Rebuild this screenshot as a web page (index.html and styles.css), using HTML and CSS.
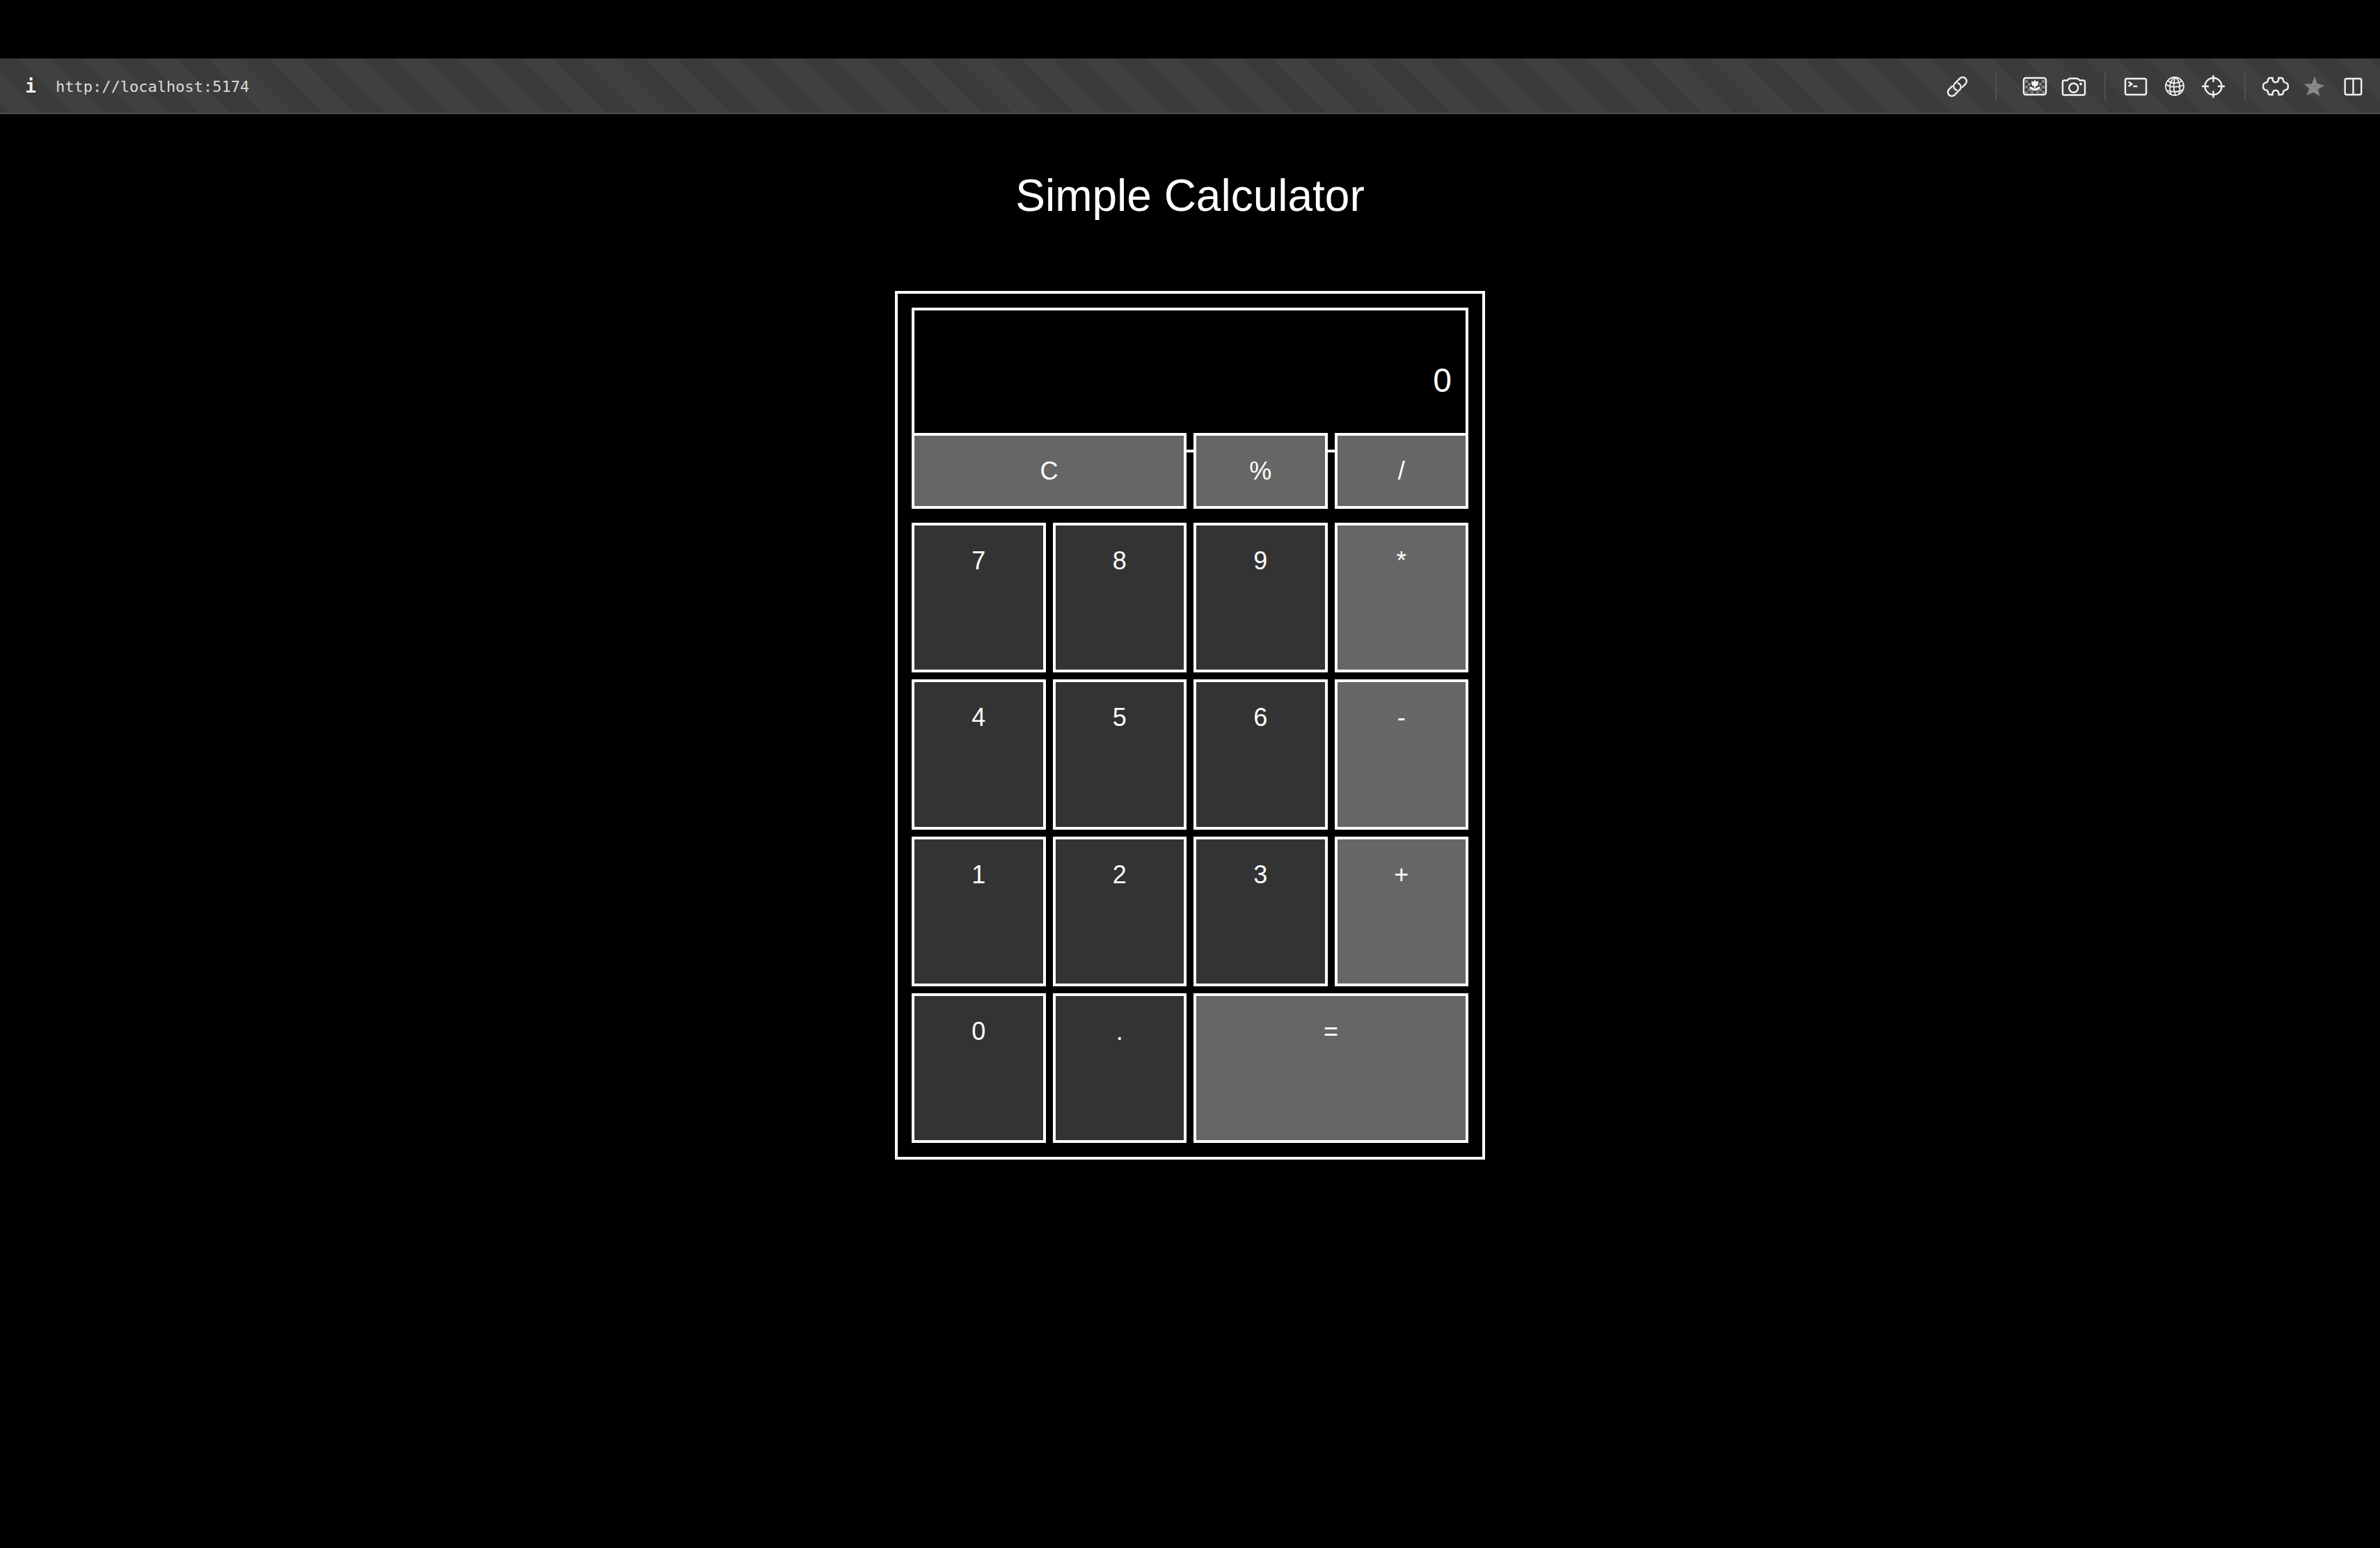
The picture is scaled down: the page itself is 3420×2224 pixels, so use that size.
FILE: index.html
```
<!DOCTYPE html>
<html lang="en">
<head>
  <meta charset="utf-8">
  <title>Simple Calculator</title>
  <link rel="stylesheet" href="styles.css">
</head>
<body>
  <header class="toolbar">
    <button class="site-info" type="button" aria-label="Site information">i</button>
    <input class="address" type="text" value="http://localhost:5174" aria-label="Address" spellcheck="false">
    <button class="tool" type="button" aria-label="Copy link">
      <svg class="icon" viewBox="0 0 40 40">
        <path d="M14 19 L8.700 24.300 A5.650 5.650 0 0 0 16.700 32.300 L24 25 A5.800 5.800 0 0 0 24 17 Q22.500 15.500 20.500 15.500"/>
        <path d="M27 22 L32.300 16.700 A5.650 5.650 0 0 0 24.300 8.700 L17 16 A5.800 5.800 0 0 0 17 24 Q18.500 25.500 20.500 25.500"/>
      </svg>
    </button>
    <span class="divider divider-wide"></span>
    <div class="tool-group">
      <button class="tool" type="button" aria-label="Picture">
        <svg class="icon" viewBox="0 0 40 40">
          <path class="checks" d="M6 11h4v4H6zM6 19h4v4H6zM6 27h4v3H6zM10 15h4v4h-4zM10 23h4v4h-4zM14 27h4v3h-4zM22 27h4v3h-4zM26 15h4v4h-4zM26 23h4v4h-4zM30 11h4v4h-4zM30 19h4v4h-4zM30 27h4v3h-4z"/>
          <rect x="4" y="8" width="32" height="24" rx="3"/>
          <path class="solid" d="M15.300 12 L17.700 13.600 L20 11 L22.500 13.600 L25 12 V16 Q25 19.500 21 20.200 V24 Q23 20.500 28 20.500 Q27 26.300 20.200 26.300 Q13 26.300 12 20.500 Q17.500 20.500 19.200 24 V20.200 Q15.300 19.500 15.300 16 Z"/>
        </svg>
      </button>
      <button class="tool" type="button" aria-label="Capture">
        <svg class="icon" viewBox="0 0 40 40">
          <path d="M6.500 11.500 H10.500 L13.500 9 Q14 8.700 14.700 8.700 H24.500 Q25.200 8.700 25.700 9 L28.700 11.500 H33.500 Q36 11.500 36 14 V30 Q36 32.500 33.500 32.500 H6.500 Q4 32.500 4 30 V14 Q4 11.500 6.500 11.500 Z"/>
          <circle cx="19.700" cy="22.300" r="6.500"/>
          <circle class="solid" cx="30" cy="16.700" r="1.900"/>
        </svg>
      </button>
    </div>
    <span class="divider"></span>
    <div class="tool-group">
      <button class="tool" type="button" aria-label="Console">
        <svg class="icon" viewBox="0 0 40 40">
          <rect x="5" y="9" width="30" height="23" rx="2.500"/>
          <path d="M9.700 13.500 L14.300 16.700 L9.700 20 M16.300 20 H22.300"/>
        </svg>
      </button>
      <button class="tool" type="button" aria-label="Network">
        <svg class="icon icon-fine" viewBox="0 0 40 40">
          <circle cx="20" cy="20" r="13"/>
          <path d="M21 7 C13 11 11 21 15 32 M21 7 C18 14 18 24 21 33 M21 7 C27 12 29 21 26 31 M10 12 C16 16.500 24 16 31 12 M7 17 C14 22 25 22 33 18 M9 26 C15 28 25 29 32 25"/>
        </svg>
      </button>
      <button class="tool" type="button" aria-label="Inspect">
        <svg class="icon" viewBox="0 0 40 40">
          <circle cx="19.500" cy="20" r="12"/>
          <path d="M19.500 4 V14 M19.500 26.500 V36.500 M3 20 H13 M26 20 H36"/>
        </svg>
      </button>
    </div>
    <span class="divider"></span>
    <div class="tool-group">
      <button class="tool" type="button" aria-label="Extensions">
        <svg class="icon" viewBox="0 0 40 40">
          <path d="M15.500 8 C15.500 12.500 17 14.200 20 14.200 S24.500 12.500 24.500 8 H28 Q30.500 8 31 11 Q31.200 14.300 33.500 14.300 C36.500 15 38 17 38 20 S36.500 25 33.500 25.700 Q31.200 25.700 31 29 Q30.500 32 28 32 H24.500 C24.500 27.500 23 25.800 20 25.800 S15.500 27.500 15.500 32 H12 Q9.500 32 9 29 Q8.800 25.700 6.500 25.700 C3.500 25 2 23 2 20 S3.500 15 6.500 14.300 Q8.800 14.300 9 11 Q9.500 8 12 8 Z"/>
        </svg>
      </button>
      <button class="tool" type="button" aria-label="Bookmark">
        <svg class="icon" viewBox="0 0 40 40">
          <path class="star" d="M20.300 5.500 L23.500 16 L34.600 18.700 L25 24 L27.300 34 L18.500 28.500 L8.500 33 L12.500 23.300 L5 16.500 L16 16.500 Z"/>
          <path class="star-veins" d="M20.300 9 L19.500 20 M31 19 L19.500 20 M25.500 31 L19.500 20 M11 30.500 L19.500 20 M8 18 L19.500 20"/>
        </svg>
      </button>
      <button class="tool" type="button" aria-label="Split view">
        <svg class="icon" viewBox="0 0 40 40">
          <rect x="7.700" y="9" width="23.500" height="23" rx="2.500"/>
          <path d="M19.500 9 V32"/>
        </svg>
      </button>
    </div>
  </header>

  <main class="page">
    <h1 class="title">Simple Calculator</h1>
    <section class="calculator" aria-label="Calculator">
      <output class="display">0</output>
      <div class="keys keys-top">
        <button class="key key-op key-wide" type="button">C</button>
        <button class="key key-op" type="button">%</button>
        <button class="key key-op" type="button">/</button>
      </div>
      <div class="keys keys-main">
        <button class="key" type="button">7</button>
        <button class="key" type="button">8</button>
        <button class="key" type="button">9</button>
        <button class="key key-op" type="button">*</button>
        <button class="key" type="button">4</button>
        <button class="key" type="button">5</button>
        <button class="key" type="button">6</button>
        <button class="key key-op" type="button">-</button>
        <button class="key" type="button">1</button>
        <button class="key" type="button">2</button>
        <button class="key" type="button">3</button>
        <button class="key key-op" type="button">+</button>
        <button class="key" type="button">0</button>
        <button class="key" type="button">.</button>
        <button class="key key-op key-wide" type="button">=</button>
      </div>
    </section>
  </main>
</body>
</html>
```
FILE: styles.css
```
* {
  box-sizing: border-box;
}

body {
  margin: 0;
  padding-top: 84px;
  background: #000;
  color: #fff;
  font-family: "Liberation Sans", Arial, sans-serif;
}

/* Browser toolbar */

.toolbar {
  display: flex;
  align-items: center;
  height: 80px;
  padding: 2px 18px 0 32px;
  border-bottom: 2px solid #4f4f4f;
  background: linear-gradient(45deg, #404040 25%, #3b3b3b 25% 50%, #404040 50% 75%, #3b3b3b 75%) 28px 0 / 90px 90px;
}

.site-info,
.tool {
  padding: 0;
  border: 0;
  background: none;
  color: #f2f2f2;
}

.site-info {
  width: 24px;
  font: bold 26px/40px "DejaVu Sans Mono", monospace;
}

.address {
  flex: 1;
  min-width: 0;
  padding: 2px 24px 0;
  border: 0;
  background: none;
  color: #dcdcdc;
  font: 22px/40px "DejaVu Sans Mono", monospace;
}

.tool,
.icon {
  display: block;
  width: 40px;
  height: 40px;
}

.tool-group {
  display: flex;
  gap: 16px;
}

.divider {
  width: 2px;
  height: 40px;
  margin: 0 23px 0 24px;
  background: #505050;
}

.divider-wide {
  margin: 0 35px;
}

.icon {
  fill: none;
  stroke: #f2f2f2;
  stroke-width: 2.4;
}

.icon-fine {
  stroke-width: 1.8;
}

.icon .solid {
  fill: #f2f2f2;
  stroke: none;
}

.icon .checks {
  fill: #858585;
  stroke: none;
}

.icon .star {
  fill: #8c8c8c;
  stroke: none;
}

.icon .star-veins {
  stroke: #787878;
  stroke-width: 1;
}

/* Calculator */

.page {
  display: flex;
  flex-direction: column;
  align-items: center;
  gap: 100px;
  padding: 80px 20px;
}

.title {
  margin: 0;
  font-size: 64px;
  font-weight: 400;
  line-height: 74px;
}

.calculator {
  width: 100%;
  max-width: 848px;
  padding: 20px;
  border: 4px solid #fff;
}

.display {
  display: flex;
  align-items: center;
  justify-content: flex-end;
  height: 208px;
  padding: 0 20px;
  border: 4px solid #fff;
  font-size: 48px;
}

.keys {
  display: grid;
  grid-template-columns: repeat(4, 1fr);
  gap: 10px;
}

/* The top row of keys laps over the display's lower edge */
.keys-top {
  margin: -28px 0 20px;
}

.keys-main {
  grid-auto-rows: 1fr;
  min-height: 891px;
}

.key {
  display: flex;
  align-items: flex-start;
  justify-content: center;
  padding: 30px;
  border: 4px solid #fff;
  border-radius: 0;
  background: #333;
  color: #fff;
  font: 36px/41px "Liberation Sans", Arial, sans-serif;
}

.key-op {
  background: #666;
}

.key-wide {
  grid-column: span 2;
}
```
